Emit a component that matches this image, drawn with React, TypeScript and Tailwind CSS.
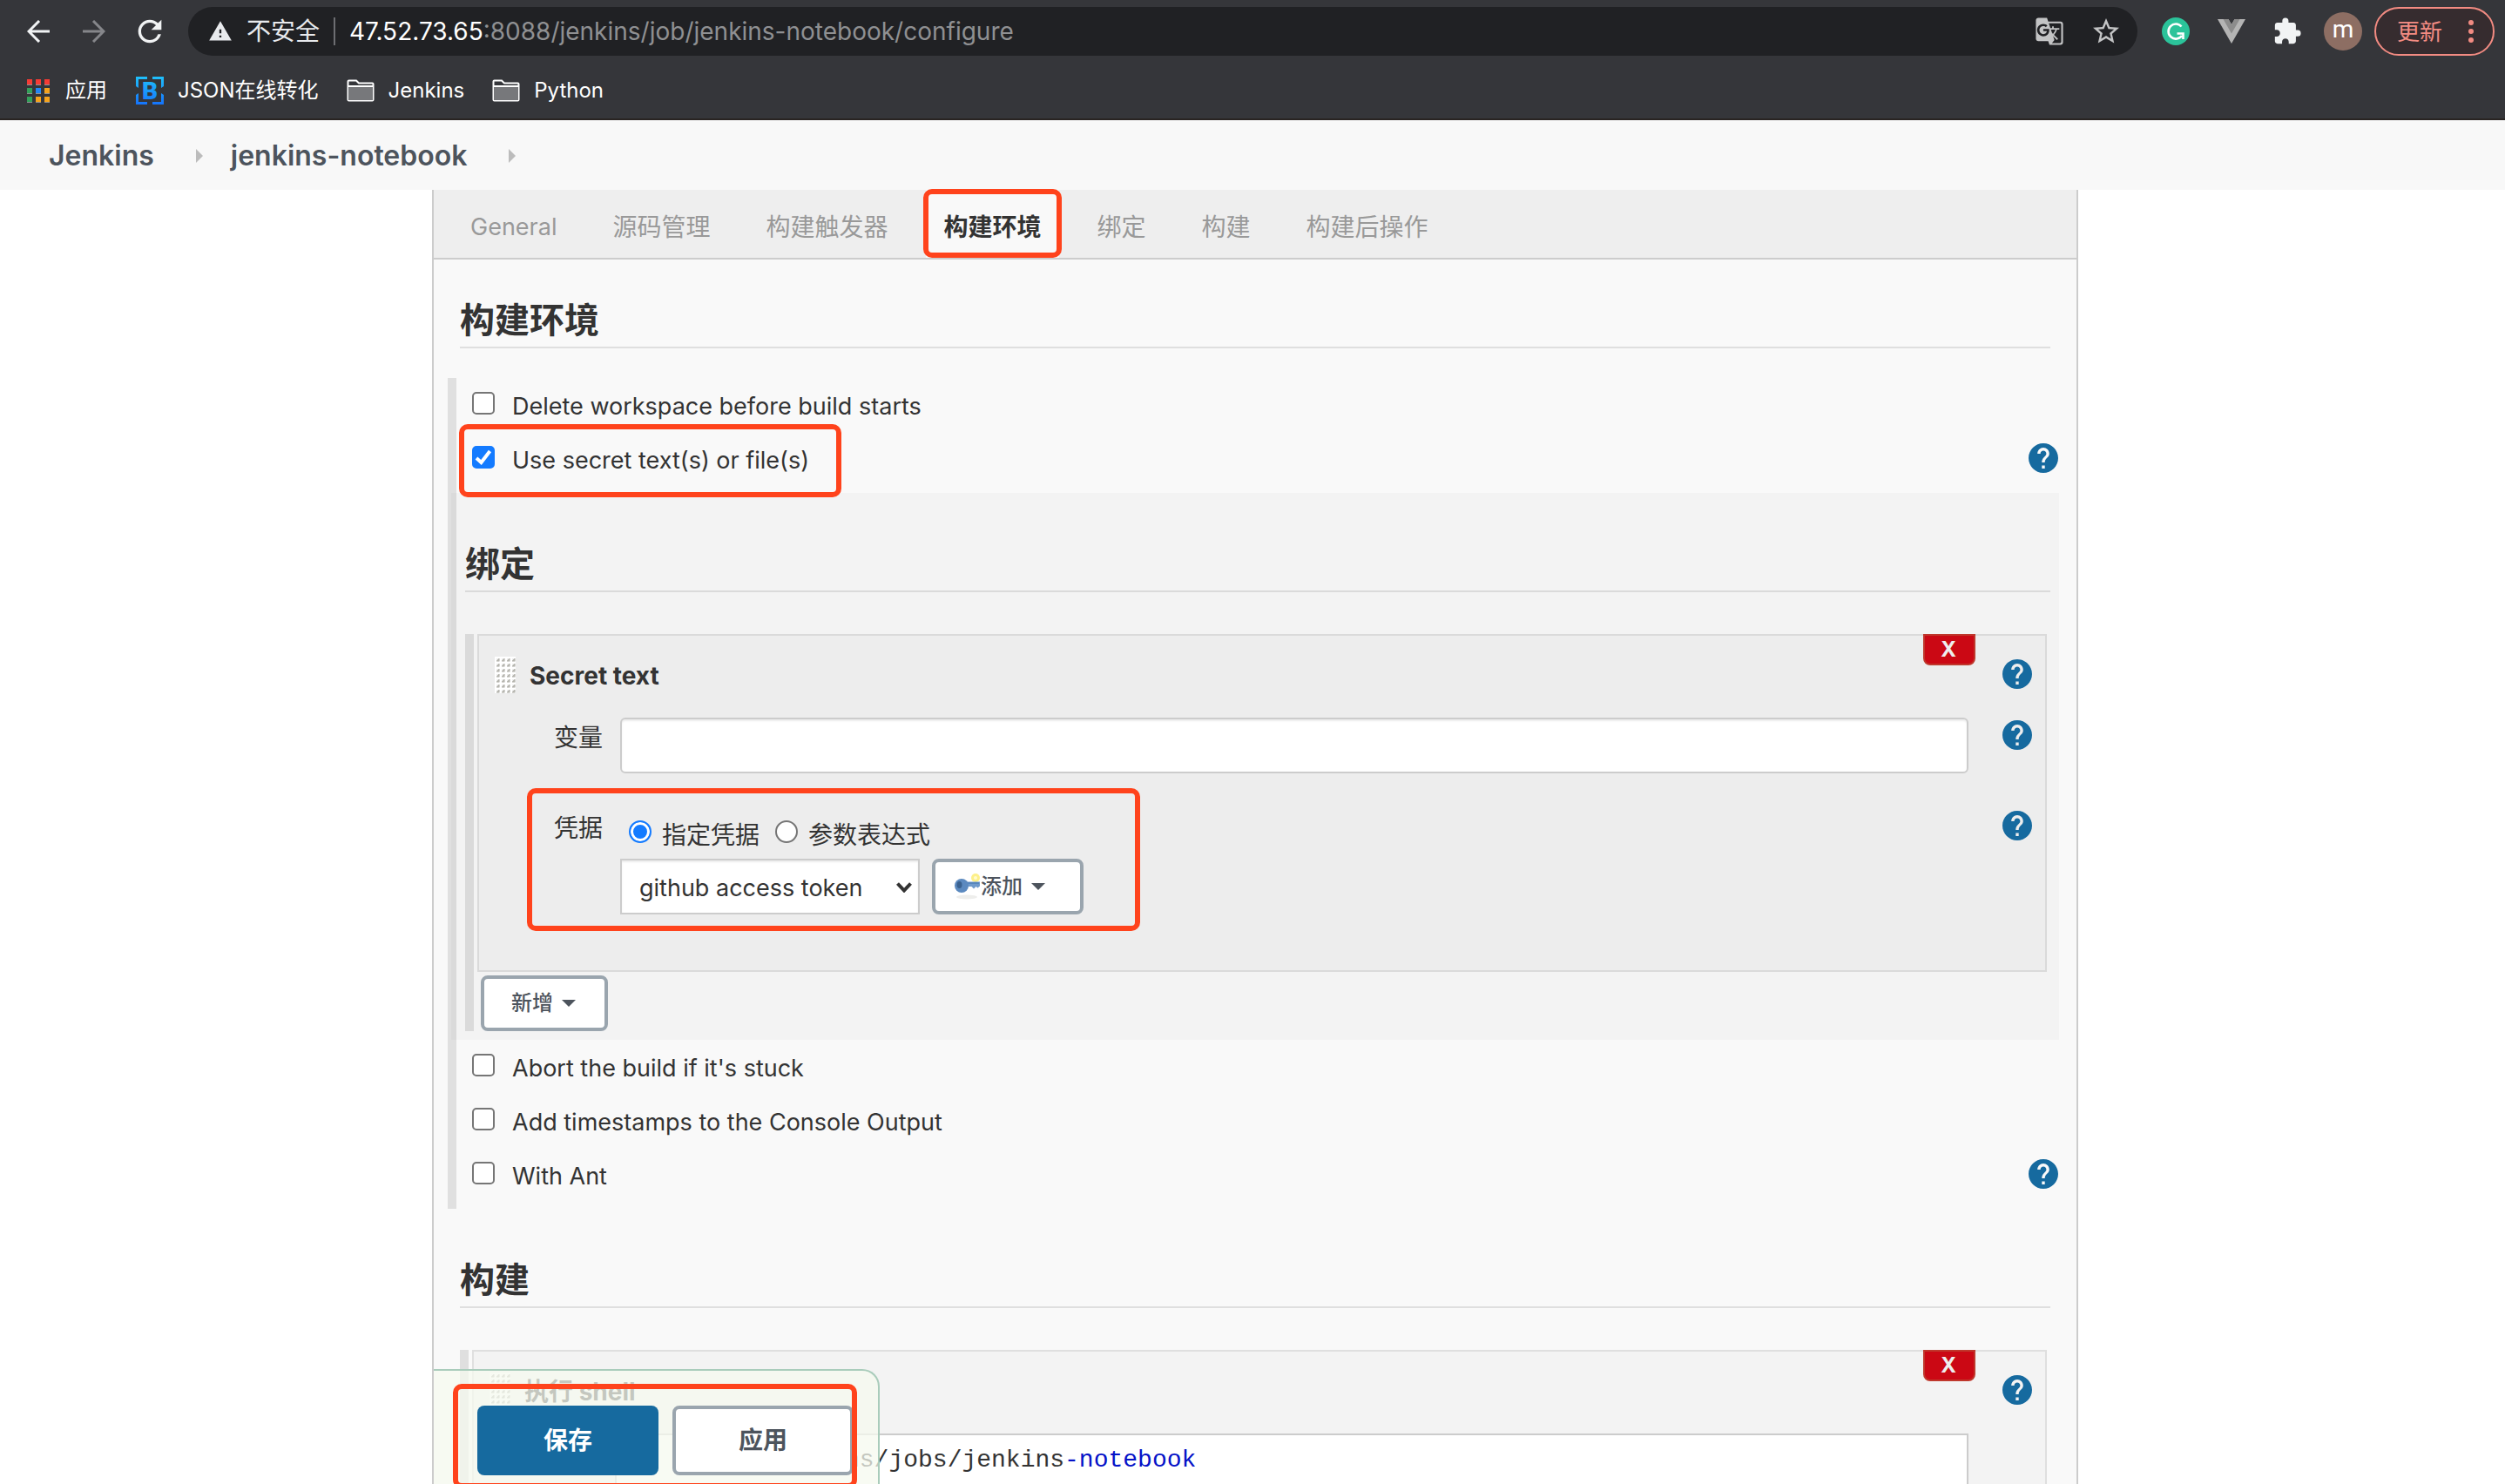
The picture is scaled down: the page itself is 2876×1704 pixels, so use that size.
import React, { useState } from "react";
import { MdExtension, MdGTranslate, MdRefresh, MdStarBorder, MdWarning } from "react-icons/md";

function HelpButton({ topic, className = "" }: { topic: string; className?: string }) {
  return (
    <button type="button" aria-label={`Help: ${topic}`} className={`size-[34px] shrink-0 ${className}`}>
      <svg viewBox="2 2 20 20" className="size-full fill-[#166a9f]">
        <path d="M12 2C6.48 2 2 6.48 2 12s4.48 10 10 10 10-4.48 10-10S17.52 2 12 2zm1 17h-2v-2h2v2zm2.07-7.75l-.9.92C13.45 12.9 13 13.5 13 15h-2v-.5c0-1.1.45-2.1 1.17-2.83l1.24-1.26c.37-.36.59-.86.59-1.41 0-1.1-.9-2-2-2s-2 .9-2 2H8c0-2.21 1.79-4 4-4s4 1.79 4 4c0 .88-.36 1.68-.93 2.25z" />
      </svg>
    </button>
  );
}

function Highlight({ className }: { className: string }) {
  return <div className={`pointer-events-none absolute z-20 rounded-[10px] border-[6px] border-[#ff431c] ${className}`} />;
}

function DragHandle() {
  const cols = [0, 1, 2, 3];
  const rows = [0, 1, 2, 3, 4, 5, 6];
  return (
    <svg viewBox="0 0 24 42" className="mt-6 h-[42px] w-6 shrink-0" aria-hidden="true">
      {rows.flatMap((r) =>
        cols.map((c) => (
          <g key={`${r}-${c}`}>
            <path d={`M${c * 6} ${r * 6 + 6}V${r * 6}H${c * 6 + 6}V${r * 6 + 2}H${c * 6 + 2}V${r * 6 + 6}Z`} fill="#fff" />
            <path d={`M${c * 6 + 5} ${r * 6 + 2}V${r * 6 + 5}H${c * 6 + 2}Z`} fill="#aaa9a2" stroke="#bdbcb6" />
          </g>
        )),
      )}
    </svg>
  );
}

function Caret() {
  return (
    <svg viewBox="0 0 16 8" className="h-2 w-4 fill-[#4d545d]" aria-hidden="true">
      <path d="M0 0h16l-8 8z" />
    </svg>
  );
}

function Option({ label, help, defaultChecked, highlighted }: { label: string; help?: boolean; defaultChecked?: boolean; highlighted?: boolean }) {
  const [on, setOn] = useState(!!defaultChecked);
  return (
    <div className="relative flex h-[62px] items-start">
      <label className="flex items-start gap-5 pt-4 pl-[18px]">
        <span className="relative size-[26px]">
          <input
            type="checkbox"
            checked={on}
            onChange={(e) => setOn(e.target.checked)}
            className="block size-[26px] appearance-none rounded-[5px] border-2 border-[#767676] bg-white checked:border-[#147bff] checked:bg-[#147bff]"
          />
          {on && (
            <svg viewBox="0 0 26 26" className="pointer-events-none absolute inset-0 fill-none stroke-white stroke-[4]">
              <path d="M5 14l5.500 5L20.500 6" />
            </svg>
          )}
        </span>
        <span className="text-[27px] leading-[34px]">{label}</span>
      </label>
      {help && <HelpButton topic={label} className="mt-[13px] mr-px ml-auto" />}
      {highlighted && <Highlight className="-top-[9px] left-[3px] h-[84px] w-[439px]" />}
    </div>
  );
}

function Heading({ children, className }: { children: React.ReactNode; className: string }) {
  return <h2 className={`border-b-2 border-black/10 pb-2.5 text-[40px] leading-10 font-bold ${className}`}>{children}</h2>;
}

function Chunk({ title, children, footer, className = "" }: { title: string; children: React.ReactNode; footer?: React.ReactNode; className?: string }) {
  return (
    <div className={`flex gap-1 ${className}`}>
      <div className="w-2.5 shrink-0 bg-black/10" />
      <div className="min-w-0 flex-1">
        <section className="relative border-2 border-black/10 bg-black/[.025] bg-clip-padding">
          <header className="flex h-[94px] items-start pr-[15px] pl-[18px]">
            <DragHandle />
            <h3 className="mt-[30px] ml-4 leading-8 font-bold">{title}</h3>
            <HelpButton topic={title} className="mt-[27px] ml-auto" />
          </header>
          <button
            type="button"
            aria-label={`Delete ${title}`}
            className="absolute -top-0.5 right-20 flex h-9 w-[60px] items-center justify-center rounded-b-lg border-2 border-[#bf372c] bg-[#cb0814] pr-0.5 text-2xl font-bold text-[#eee]"
          >
            X
          </button>
          {children}
        </section>
        {footer}
      </div>
    </div>
  );
}

function BrowserBar() {
  return (
    <header className="border-b-2 border-[#292422] bg-[#35363a] text-white">
      <div className="flex h-[72px] items-center pr-3 pl-[31px]">
        <button type="button" aria-label="Back" className="w-[26px]">
          <svg viewBox="0 0 26 26" className="size-[26px] fill-none stroke-[#f1f3f4] stroke-3"><path d="M26 13H2M14 1L2 13l12 12" /></svg>
        </button>
        <button type="button" aria-label="Forward" className="ml-[38px] w-[26px]">
          <svg viewBox="0 0 26 26" className="size-[26px] fill-none stroke-[#85868a] stroke-3"><path d="M0 13h24M12 1l12 12-12 12" /></svg>
        </button>
        <button type="button" aria-label="Reload" className="ml-[31px]"><MdRefresh className="size-10 text-[#f1f3f4]" /></button>
        <div className="ml-[24px] flex h-14 min-w-0 flex-1 items-center rounded-full bg-[#202124] pr-[18px] pl-[23px] text-[28px]">
          <MdWarning className="size-7 shrink-0 text-[#e8eaed]" />
          <span className="ml-4 shrink-0 text-[#e8eaed]">不安全</span>
          <span className="mx-4 h-8 w-0.5 shrink-0 bg-[#6d6e72]" />
          <span className="flex-1 truncate text-[#8f9092]"><span className="text-white">47.52.73.65</span>:8088/jenkins/job/jenkins-notebook/configure</span>
          <button type="button" aria-label="Translate"><MdGTranslate className="size-[34px] text-[#c3c4c5]" /></button>
          <button type="button" aria-label="Bookmark" className="ml-[30px]"><MdStarBorder className="size-9 text-[#c3c4c5]" /></button>
        </div>
        <button type="button" aria-label="Grammarly" className="ml-7">
          <svg viewBox="0 0 32 32" className="size-8">
            <circle cx="16" cy="16" r="16" fill="#2bc39a" />
            <path d="M22.500 10.500A8.500 8.500 0 1 0 23 21M17.500 18.500h7v6.500" fill="none" stroke="#fff" strokeWidth="2.600" />
          </svg>
        </button>
        <button type="button" aria-label="Vue" className="ml-8">
          <svg viewBox="0 0 32 28" className="h-7 w-8">
            <path d="M0 0h12.500L16 6l3.500-6H32L16 28z" fill="#b4b4b4" />
            <path d="M6.500 0h6L16 6l3.500-6h6L16 16.500z" fill="#8c8c8c" />
          </svg>
        </button>
        <button type="button" aria-label="Extensions" className="mr-px ml-[31px]"><MdExtension className="size-[34px] text-[#f1f3f4]" /></button>
        <button type="button" aria-label="Profile" className="ml-6 flex size-11 items-center justify-center rounded-full bg-[#8d6e63] pb-1 font-['Roboto'] text-[28px]">m</button>
        <button type="button" className="ml-3.5 flex h-14 w-[138px] items-center justify-between rounded-full border-2 border-[#f28b82] bg-[#362c2f] pr-[22px] pl-[24px] text-[26px] text-[#f28b82]">
          更新
          <svg viewBox="0 0 6 26" className="h-[26px] w-1.5 fill-current"><circle cx="3" cy="3" r="3" /><circle cx="3" cy="13" r="3" /><circle cx="3" cy="23" r="3" /></svg>
        </button>
      </div>
      <nav className="flex h-16 items-center pl-[31px] text-2xl">
        <a href="#apps" className="flex items-center gap-[18px]">
          <svg viewBox="0 0 26 27" className="h-[27px] w-[26px]" aria-hidden="true">
            {["#f53b35", "#f53b35", "#f53b35", "#34a05a", "#2386f5", "#f5a31d", "#34a05a", "#f5a31d", "#f5a31d"].map((c, i) => (
              <g key={i}>
                <rect x={(i % 3) * 10} y={Math.floor(i / 3) * 10 + 1} width="6" height="6" fill="#8f9092" />
                <rect x={(i % 3) * 10} y={Math.floor(i / 3) * 10} width="6" height="6" fill={c} />
              </g>
            ))}
          </svg>
          应用
        </a>
        <a href="#json" className="ml-[33px] flex items-center gap-4">
          <svg viewBox="0 0 32 32" className="size-8" aria-hidden="true">
            <defs><linearGradient id="b" x1="0" y1="0" x2="0" y2="1"><stop offset="0" stopColor="#1fc0fb" /><stop offset="1" stopColor="#1573fb" /></linearGradient></defs>
            <path d="M0 0h13v3H3v10l-3-2zM19 0h13v11l-3 2V3H19zM0 21l3-2v10h10v3H0zM29 19l3 2v11H19v-3h10z" fill="url(#b)" />
            <text x="16" y="26" textAnchor="middle" fontSize="28" fontWeight="900" fontFamily="Roboto" fill="url(#b)">B</text>
          </svg>
          JSON在线转化
        </a>
        {["Jenkins", "Python"].map((name) => (
          <a key={name} href={`#${name}`} className="ml-8 flex items-center gap-4">
            <svg viewBox="0 0 32 26" className="h-[26px] w-8" aria-hidden="true">
              <path d="M1.500 2.500q0-1 1-1h8.500l3 3h15.500q1 0 1 1v18q0 1-1 1h-27q-1 0-1-1z" fill="#35363a" stroke="#fff" strokeWidth="2" />
              <path d="M2 8h28v16H2z" fill="#77787b" /><path d="M2 8h28" stroke="#fff" strokeWidth="2" />
            </svg>
            {name}
          </a>
        ))}
      </nav>
    </header>
  );
}

const tabs = ["General", "源码管理", "构建触发器", "构建环境", "绑定", "构建", "构建后操作"];

function Crumb({ children }: { children: string }) {
  return (
    <>
      <a href={`#${children}`}>{children}</a>
      <svg viewBox="0 0 8 16" className="mr-8 ml-12 h-4 w-2 fill-[#bcbcbc]" aria-hidden="true"><path d="M0 0l8 8-8 8z" /></svg>
    </>
  );
}

export default function App() {
  return (
    <div className="flex h-screen flex-col overflow-hidden bg-white font-['Inter','Noto_Sans_CJK_SC',sans-serif] text-[28px] text-[#333]">
      <BrowserBar />
      <nav className="flex h-20 shrink-0 items-center bg-[#f8f8f8] pt-0.5 pl-14 text-[32px] font-semibold text-[#4d545d]">
        <Crumb>Jenkins</Crumb>
        <Crumb>jenkins-notebook</Crumb>
      </nav>

      <main className="relative mr-[490px] ml-[496px] min-h-0 flex-1 border-x-2 border-[#ccc] bg-[#f9f9f9]">
        <div role="tablist" className="flex h-20 gap-6 border-b-2 border-[#ccc] bg-[#eee] pl-[22px]">
          {tabs.map((tab) =>
            tab === "构建环境" ? (
              <button key={tab} role="tab" aria-selected="true" className="relative bg-[#f9f9f9] px-5 pt-2 font-bold text-[#333]">
                {tab}
                <Highlight className="-inset-x-[3px] -top-px bottom-0" />
              </button>
            ) : (
              <button key={tab} role="tab" aria-selected="false" className={`px-5 pt-2 text-[#999] ${tab === "General" ? "text-[27px]" : ""}`}>{tab}</button>
            ),
          )}
        </div>

        <form onSubmit={(e) => e.preventDefault()}>
          <Heading className="mr-[30px] ml-[30px] pt-[50px]">构建环境</Heading>
          <div className="mt-[34px] mr-5 ml-4 border-l-[10px] border-[#e0e0e0] pb-2">
            <Option label="Delete workspace before build starts" />
            <Option label="Use secret text(s) or file(s)" defaultChecked help highlighted />
            <div className="mt-2 -ml-1.5 bg-black/[.025] pb-2.5 pl-4">
              <Heading className="mr-2.5 pt-[62px]">绑定</Heading>
              <Chunk
                title="Secret text"
                className="mt-12 mr-3.5"
                footer={
                  <button type="button" className="mt-1 ml-1 flex h-16 w-[146px] items-center justify-center gap-2.5 rounded-lg border-4 border-[#9aa5ae] bg-white pr-0.5 text-2xl font-medium text-[#4d545d]">
                    新增 <Caret />
                  </button>
                }
              >
                <div className="flex items-start pr-[15px] pl-[86px]">
                  <label htmlFor="variable" className="w-[76px] leading-[46px]">变量</label>
                  <input id="variable" type="text" className="h-16 min-w-0 flex-1 rounded-md border-2 border-[#ccc] bg-white px-5 shadow-[inset_0_2px_2px_rgba(0,0,0,0.075)]" />
                  <HelpButton topic="变量" className="mt-[3px] ml-[39px]" />
                </div>
                <div className="relative mt-10 flex items-start pr-[15px] pb-16 pl-[86px]">
                  <span className="w-[76px] leading-[46px]">凭据</span>
                  <div className="flex-1">
                    <div className="flex h-[58px] items-start pt-3.5 pl-2.5">
                      {["指定凭据", "参数表达式"].map((name, i) => (
                        <label key={name} className="mr-[18px] flex items-start gap-3 leading-[34px]">
                          <input
                            type="radio"
                            name="credential-kind"
                            defaultChecked={i === 0}
                            className="size-[26px] appearance-none rounded-full border-2 border-[#767676] bg-white checked:border-[#147bff] checked:bg-[#147bff] checked:shadow-[inset_0_0_0_3px_#fff]"
                          />
                          {name}
                        </label>
                      ))}
                    </div>
                    <div className="flex gap-3.5">
                      <div className="relative">
                        <select aria-label="凭据" className="h-16 w-[344px] appearance-none border-2 border-[#ccc] bg-white pt-1 pl-5 text-[27px] shadow-[inset_0_2px_2px_rgba(0,0,0,0.075)]">
                          <option>github access token</option>
                        </select>
                        <svg viewBox="0 0 18 12" className="pointer-events-none absolute top-[27px] right-[9px] h-3 w-[18px] fill-none stroke-[#333] stroke-4"><path d="M1.500 1.500L9 9.500l7.500-8" /></svg>
                      </div>
                      <button type="button" className="flex h-16 w-[174px] items-center rounded-lg border-4 border-[#9aa5ae] bg-white pl-[22px] text-2xl font-medium text-[#4d545d]">
                        <svg viewBox="0 0 30 30" className="size-[30px]" aria-hidden="true">
                          <ellipse cx="14" cy="27" rx="12" ry="2.500" fill="#eeeeec" />
                          <circle cx="24" cy="5" r="5" fill="#fdf08a" /><circle cx="24" cy="5" r="2" fill="#fffbd0" />
                          <path d="M12 9.500h17v5l-2.500 2-2-1.500-2.500 2.500-2.500-2.500H12z" fill="#6f9acb" />
                          <path d="M13 11h15" stroke="#4f7fb8" strokeWidth="1.500" />
                          <ellipse cx="8" cy="14" rx="8" ry="8" fill="#5b89bf" /><ellipse cx="5.500" cy="13" rx="3" ry="4" fill="#3a618f" />
                        </svg>
                        <span className="mr-2.5">添加</span>
                        <Caret />
                      </button>
                    </div>
                  </div>
                  <HelpButton topic="凭据" className="mt-[3px] ml-[39px]" />
                  <Highlight className="-top-[23px] left-[55px] h-[164px] w-[704px]" />
                </div>
              </Chunk>
            </div>
            <Option label="Abort the build if it's stuck" />
            <Option label="Add timestamps to the Console Output" />
            <Option label="With Ant" help />
          </div>

          <Heading className="mr-[30px] ml-[30px] pt-[62px]">构建</Heading>
          <Chunk title="执行 shell" className="mt-12 mr-[34px] ml-[30px]">
            <div className="mr-[88px] ml-[162px] h-60 border-2 border-[#ccc] bg-white pt-2 pl-[178px] leading-9">
              <code className="font-['Liberation_Mono',monospace]">jenkins/jobs/jenkins<span className="text-[#0512c8]">-notebook</span></code>
            </div>
          </Chunk>
        </form>

        <footer className="absolute bottom-0 left-0 z-10 flex h-[132px] w-[512px] gap-4 rounded-tr-[20px] border-t-2 border-r-2 border-[#a9ccbb] bg-[#f5f9ef]/75 pt-10 pl-[50px]">
          <button type="submit" className="h-20 w-[208px] rounded-lg bg-[#166a9f] font-semibold text-white">保存</button>
          <button type="button" className="h-20 w-[208px] rounded-lg border-4 border-[#9aa5ae] bg-white font-semibold text-[#4d545d]">应用</button>
          <Highlight className="top-[15px] left-[22px] h-[120px] w-[464px]" />
        </footer>
      </main>
    </div>
  );
}
